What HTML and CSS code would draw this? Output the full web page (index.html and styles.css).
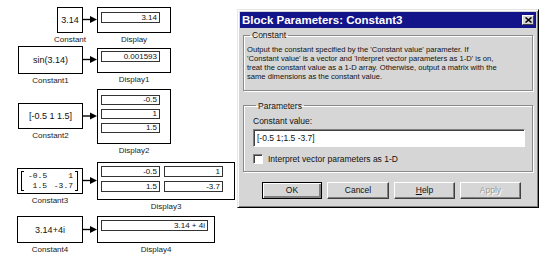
FILE: index.html
```html
<!DOCTYPE html>
<html lang="en">
    <head>
        <meta charset="UTF-8">
        <title>Constant blocks and Block Parameters</title>
        <link rel="stylesheet" href="styles.css">
    </head>
    <body>
        <div class="canvas">
            <!-- signal lines between the blocks -->
            <svg class="wires" width="544" height="262" viewBox="0 0 544 262">
                <g stroke="#000" stroke-width="1.4">
                    <line x1="83" y1="19.5" x2="92" y2="19.5"/>
                    <line x1="83" y1="59.5" x2="92" y2="59.5"/>
                    <line x1="83" y1="116" x2="92" y2="116"/>
                    <line x1="83" y1="180.5" x2="92" y2="180.5"/>
                    <line x1="83" y1="229.5" x2="92" y2="229.5"/>
                </g>
                <g fill="#000">
                    <polygon points="90,16 97,19.5 90,23"/>
                    <polygon points="90,56 97,59.5 90,63"/>
                    <polygon points="90,112.5 97,116 90,119.5"/>
                    <polygon points="90,177 97,180.5 90,184"/>
                    <polygon points="90,226 97,229.5 90,233"/>
                </g>
            </svg>

            <div class="node n-c0">
                <div class="blk">3.14</div>
                <div class="lbl">Constant</div>
            </div>
            <div class="node n-d0">
                <div class="blk disp">
                    <div class="field">3.14</div>
                </div>
                <div class="lbl">Display</div>
            </div>

            <div class="node n-c1">
                <div class="blk">sin(3.14)</div>
                <div class="lbl">Constant1</div>
            </div>
            <div class="node n-d1">
                <div class="blk disp">
                    <div class="field">0.001593</div>
                </div>
                <div class="lbl">Display1</div>
            </div>

            <div class="node n-c2">
                <div class="blk">[-0.5 1 1.5]</div>
                <div class="lbl">Constant2</div>
            </div>
            <div class="node n-d2">
                <div class="blk disp">
                    <div class="field">-0.5</div>
                    <div class="field">1</div>
                    <div class="field">1.5</div>
                </div>
                <div class="lbl">Display2</div>
            </div>

            <div class="node n-c3">
                <div class="blk">
                    <div class="mat">
                        <span class="br br-l"></span>
                        <div class="mat-cells">
                            <span>-0.5</span><span>1</span>
                            <span>1.5</span><span>-3.7</span>
                        </div>
                        <span class="br br-r"></span>
                    </div>
                </div>
                <div class="lbl">Constant3</div>
            </div>
            <div class="node n-d3">
                <div class="blk disp grid2">
                    <div class="field">-0.5</div>
                    <div class="field">1</div>
                    <div class="field">1.5</div>
                    <div class="field">-3.7</div>
                </div>
                <div class="lbl">Display3</div>
            </div>

            <div class="node n-c4">
                <div class="blk">3.14+4i</div>
                <div class="lbl">Constant4</div>
            </div>
            <div class="node n-d4">
                <div class="blk disp">
                    <div class="field">3.14 + 4i</div>
                </div>
                <div class="lbl">Display4</div>
            </div>

            <!-- parameters dialog window -->
            <div class="dialog">
                <div class="titlebar">
                    <span>Block Parameters: Constant3</span>
                    <span class="close">
                        <svg width="7" height="6" viewBox="0 0 7 6">
                            <path d="M0.5 0.5 L6.5 5.5 M6.5 0.5 L0.5 5.5" stroke="#000" stroke-width="1.5"/>
                        </svg>
                    </span>
                </div>

                <fieldset class="grp grp-desc">
                    <legend>Constant</legend>
                    <p class="desc">Output the constant specified by the 'Constant value' parameter. If<br>
                    'Constant value' is a vector and 'Interpret vector parameters as 1-D' is on,<br>
                    treat the constant value as a 1-D array. Otherwise, output a matrix with the<br>
                    same dimensions as the constant value.</p>
                </fieldset>

                <fieldset class="grp grp-params">
                    <legend>Parameters</legend>
                    <div class="plabel">Constant value:</div>
                    <div class="edit">[-0.5 1;1.5 -3.7]</div>
                    <div class="check-row">
                        <span class="check"></span>
                        <span>Interpret vector parameters as 1-D</span>
                    </div>
                </fieldset>

                <div class="buttons">
                    <div class="btn btn-default"><span>OK</span></div>
                    <div class="btn w62">Cancel</div>
                    <div class="btn"><span><u>H</u>elp</span></div>
                    <div class="btn btn-off">Apply</div>
                </div>
            </div>
        </div>
    </body>
</html>
```

FILE: styles.css
```css
body {
    margin: 0;
    background-color: #fff;
    font-family: 'Liberation Sans', Arial, sans-serif;
}
.canvas {
    position: relative;
    width: 544px;
    height: 262px;
    overflow: hidden;
}
.wires {
    position: absolute;
    left: 0;
    top: 0;
}

/* diagram blocks */
.node {
    position: absolute;
    display: flex;
    flex-direction: column;
}
.blk {
    box-sizing: border-box;
    border: 1px solid #000;
    background-color: #fff;
    display: flex;
    align-items: center;
    justify-content: center;
    font-size: 9px;
    color: #111;
}
.lbl {
    margin: 2px -30px 0;
    text-align: center;
    font-size: 8px;
    line-height: 9px;
    color: #222;
    white-space: nowrap;
}
.disp {
    flex-direction: column;
    align-items: flex-start;
    justify-content: flex-start;
    gap: 4px;
    padding: 4px 0 0 3px;
}
.field {
    box-sizing: border-box;
    width: 59px;
    height: 11px;
    border: 1px solid #333;
    padding-right: 2px;
    font-size: 8px;
    line-height: 9px;
    text-align: right;
}
.grid2 {
    display: grid;
    grid-template-columns: 59px 60px;
    grid-auto-rows: 11px;
    column-gap: 4px;
    row-gap: 4px;
    align-content: start;
}

.n-c0 { left: 57px; top: 7px; width: 26px; }
.n-c0 .blk { height: 26px; }
.n-d0 { left: 97px; top: 7px; width: 74px; }
.n-d0 .blk { height: 26px; }

.n-c1 { left: 18px; top: 46px; width: 65px; }
.n-c1 .blk { height: 28px; }
.n-d1 { left: 97px; top: 48px; width: 74px; }
.n-d1 .blk { height: 25px; padding-top: 2px; }

.n-c2 { left: 18px; top: 103px; width: 65px; }
.n-c2 .blk { height: 26px; }
.n-d2 { left: 97px; top: 89px; width: 74px; }
.n-d2 .blk { height: 55px; padding-top: 5px; }
.n-d2 .field { height: 10px; line-height: 8px; }

.n-c3 { left: 17px; top: 168px; width: 66px; }
.n-c3 .blk { height: 26px; justify-content: flex-start; }
.n-d3 { left: 97px; top: 162px; width: 138px; }
.n-d3 .blk { height: 38px; padding-top: 3px; }

.n-c4 { left: 17px; top: 216px; width: 66px; }
.n-c4 .blk { height: 27px; }
.n-d4 { left: 97px; top: 216px; width: 118px; }
.n-d4 .blk { height: 27px; padding-top: 3px; }
.n-d4 .field { width: 107px; }

/* matrix value inside Constant3 */
.mat {
    display: flex;
    height: 20px;
    margin-left: 3px;
}
.br {
    width: 2px;
    border: 1px solid #000;
}
.br-l { border-right: none; }
.br-r { border-left: none; margin-left: 2px; }
.mat-cells {
    display: grid;
    grid-template-columns: 19px 26px;
    margin-left: 4px;
    font-family: 'Liberation Mono', 'Courier New', monospace;
    font-size: 8px;
    line-height: 10px;
    text-align: right;
}

/* dialog window */
.dialog {
    position: absolute;
    left: 237px;
    top: 9px;
    width: 302px;
    height: 199px;
    box-sizing: border-box;
    padding: 2px;
    background-color: #d6d6d6;
    border: 1px solid;
    border-color: #e6e6e6 #000 #000 #e6e6e6;
    box-shadow: inset 1px 1px 0 #fff, inset -1px -1px 0 #808080;
    font-size: 8.5px;
    color: #111;
}
.titlebar {
    height: 16px;
    background-color: #14148a;
    color: #fff;
    font-weight: bold;
    font-size: 11.5px;
    display: flex;
    align-items: center;
    justify-content: space-between;
    padding: 0 2px;
}
.close {
    box-sizing: border-box;
    width: 12px;
    height: 10px;
    background-color: #d6d6d6;
    border: 1px solid;
    border-color: #fff #404040 #404040 #fff;
    display: flex;
    align-items: center;
    justify-content: center;
}
.grp {
    margin: 2px 3px 0;
    border: 1px solid #8a8a8a;
    box-shadow: 1px 1px 0 #fff, inset 1px 1px 0 #fff;
    padding: 6px 4px 8px 3px;
}
.grp legend {
    padding: 0 2px;
    margin-left: 3px;
    line-height: 10px;
}
.desc {
    margin: 0;
    font-size: 7.6px;
    line-height: 8.9px;
}
.grp-params {
    margin-top: 10px;
    padding: 5px 7px 7px 9px;
}
.plabel {
    line-height: 10px;
}
.edit {
    box-sizing: border-box;
    height: 18px;
    margin-top: 3px;
    padding: 0 3px;
    background-color: #fff;
    border: 1px solid;
    border-color: #808080 #fff #fff #808080;
    box-shadow: inset 1px 1px 0 #404040;
    line-height: 16px;
}
.check-row {
    display: flex;
    align-items: center;
    gap: 5px;
    margin-top: 7px;
}
.check {
    box-sizing: border-box;
    width: 10px;
    height: 10px;
    background-color: #fff;
    border: 1px solid;
    border-color: #808080 #fff #fff #808080;
    box-shadow: inset 1px 1px 0 #404040;
}
.buttons {
    display: flex;
    gap: 5px;
    margin: 10px 0 0 22px;
}
.btn {
    box-sizing: border-box;
    width: 61px;
    height: 17px;
    display: flex;
    align-items: center;
    justify-content: center;
    background-color: #d6d6d6;
    border: 1px solid;
    border-color: #fff #404040 #404040 #fff;
    box-shadow: inset -1px -1px 0 #808080;
}
.w62 { width: 62px; }
.btn-default {
    width: 60px;
    border-color: #000;
    box-shadow: inset 1px 1px 0 #fff, inset -2px -2px 0 #808080;
}
.btn-off {
    color: #9a9a9a;
    text-shadow: 1px 1px 0 #fff;
}
```
